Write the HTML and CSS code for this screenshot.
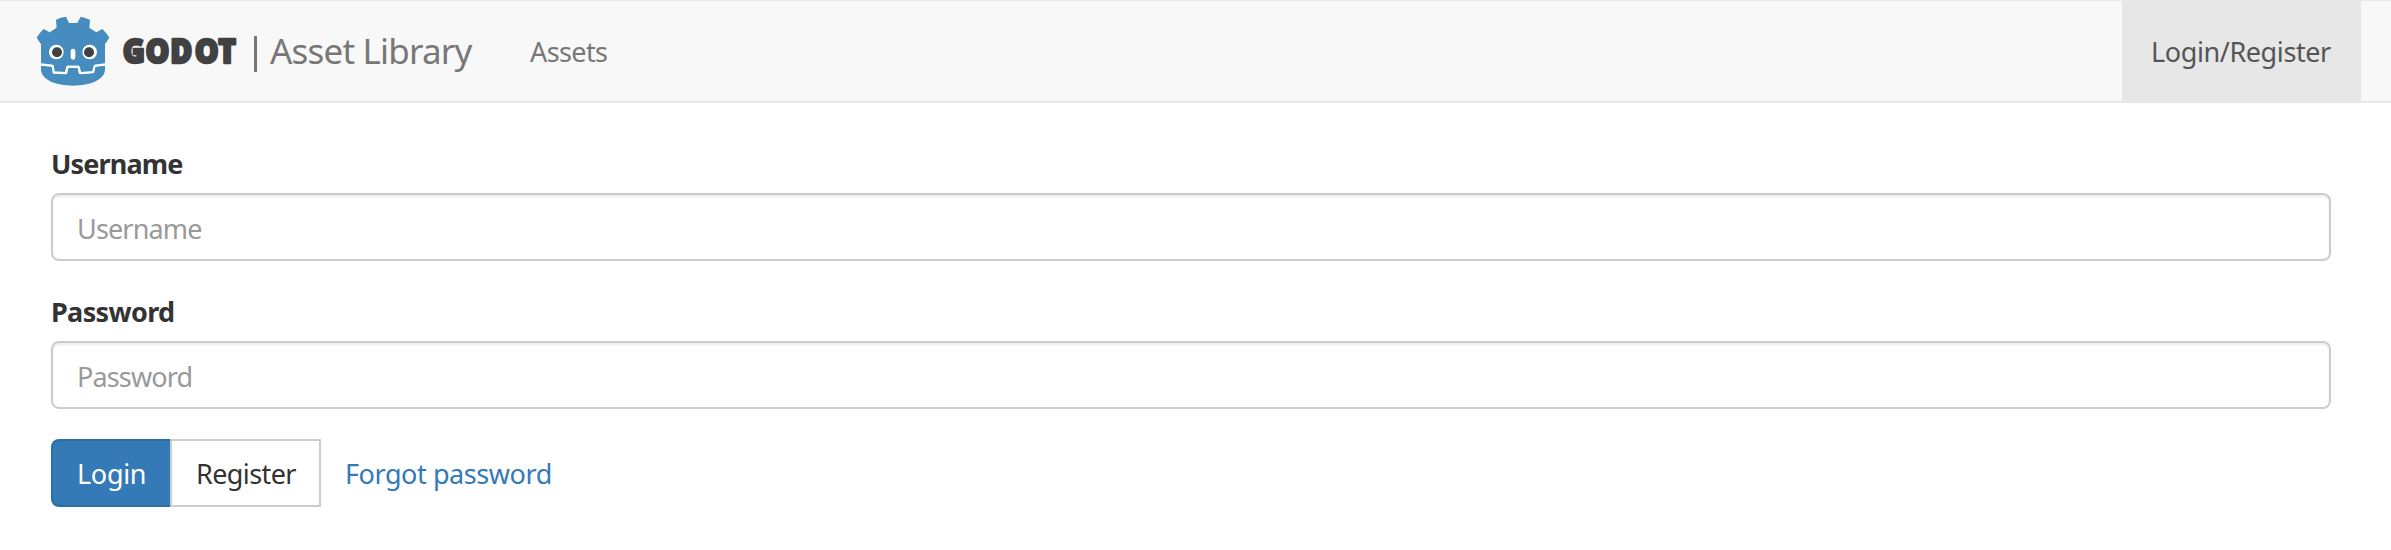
FILE: index.html
```html
<!DOCTYPE html>
<html lang="en">
<head>
<meta charset="utf-8">
<title>Godot Asset Library</title>
<link rel="stylesheet" href="styles.css">
</head>
<body>
<nav class="navbar">
  <a class="brand">
    <svg class="logo" viewBox="48 45 612 216" role="img" aria-label="Godot">
      <path fill="#478cbf" d="M63 191V133L50 113Q58 99 71 87L89 97L110 83L108 59Q122 52 138 50L147 69H172L182 50Q197 53 210 60L208 83L229 97L247 87Q260 99 268 113L255 133V191L228 194Q224 195 223 198L220 216L182 219L178 201Q177 197 173 197H144Q140 197 140 201L136 219L100 216L98 198Q97 195 93 194Z"/>
      <path fill="#478cbf" d="M63 197L95 200L98 218Q99 221 102 221L137 223Q141 223 142 219L145 204H173L176 219Q177 223 181 223L218 220Q222 220 223 217L226 200L255 197V208C255 240 210 257 159 257S63 240 63 208Z"/>
      <path fill="none" stroke="#fff" stroke-width="6" stroke-linejoin="round" d="M63 193L98 197L102 217L137 219L142 200H176L181 219L219 216L224 197L255 193"/>
      <circle cx="109" cy="156" r="22" fill="#fff"/>
      <circle cx="209" cy="156" r="22" fill="#fff"/>
      <circle cx="111" cy="157" r="15" fill="#414042"/>
      <circle cx="207" cy="157" r="15" fill="#414042"/>
      <rect x="152" y="146" width="14" height="33" rx="7" fill="#fff"/>
      <text class="wordmark" transform="translate(308 188) scale(.9 1)" x="0 76 159 240 319" y="0">GODOT</text>
    </svg>
    <span class="divider"></span>
    <span class="brand-text">Asset Library</span>
  </a>
  <a class="nav-link">Assets</a>
  <a class="nav-link nav-active">Login/Register</a>
</nav>
<form class="form">
  <label class="label label-username" for="username">Username</label>
  <input class="field" id="username" type="text" placeholder="Username">
  <label class="label" for="password">Password</label>
  <input class="field field-password" id="password" type="password" placeholder="Password">
  <div class="actions">
    <button class="btn btn-primary" type="button">Login</button>
    <button class="btn btn-default" type="button">Register</button>
    <a class="forgot">Forgot password</a>
  </div>
</form>
</body>
</html>
```
FILE: styles.css
```css
* { box-sizing: border-box; }
body {
  margin: 0;
  background: #fff;
  color: #333;
  font: 27px/40px "Noto Sans", "Open Sans", sans-serif;
}
.navbar {
  display: flex;
  height: 103px;
  padding: 0 30px 0 36px;
  background: #f8f8f8;
  border-top: 1px solid #e7e7e7;
  border-bottom: 2px solid #e7e7e7;
}
.brand { display: flex; color: #777; }
.logo { width: 204px; height: 72px; margin-top: 14px; overflow: visible; }
.wordmark {
  font: 800 100px "Open Sans", sans-serif;
  fill: #414042;
  stroke: #414042;
  stroke-width: 7px;
  stroke-linejoin: round;
}
.divider {
  width: 3px;
  height: 36px;
  margin: 35px 13px 0 14px;
  background: #777;
}
.brand-text {
  width: 260px;
  padding-top: 26px;
  font-size: 35px;
  line-height: 48px;
  letter-spacing: -0.8px;
  white-space: nowrap;
}
.nav-link {
  padding-top: 31px;
  color: #777;
  letter-spacing: -0.6px;
}
.nav-active {
  width: 239px;
  margin-left: auto;
  padding-left: 29px;
  background: #e7e7e7;
  color: #555;
  letter-spacing: -0.4px;
}
.form {
  display: flex;
  flex-direction: column;
  padding: 41px 60px 0 51px;
}
.label {
  height: 49px;
  font-weight: 700;
  letter-spacing: -0.65px;
}
.label-username { letter-spacing: -0.85px; }
.field {
  height: 68px;
  margin: 0 0 31px;
  padding: 3px 24px 0;
  border: 2px solid #ccc;
  border-radius: 8px;
  background: #fff;
  box-shadow: inset 0 2px 2px rgba(0, 0, 0, 0.075);
  font: inherit;
  letter-spacing: -0.85px;
}
.field::placeholder { color: #999; opacity: 1; }
.field-password { margin-bottom: 30px; }
.actions { display: flex; height: 68px; }
.btn {
  height: 68px;
  padding: 2px 0 0 24px;
  border: 2px solid #ccc;
  font: inherit;
  text-align: left;
}
.btn-primary {
  width: 119px;
  border-color: #2e6da4;
  border-right: 0;
  border-radius: 8px 0 0 8px;
  background: #337ab7;
  color: #fff;
  letter-spacing: -0.3px;
}
.btn-default {
  width: 151px;
  background: #fff;
  color: #333;
  letter-spacing: -0.6px;
}
.forgot {
  padding: 15px 0 0 24px;
  color: #337ab7;
  letter-spacing: -0.43px;
}
```
